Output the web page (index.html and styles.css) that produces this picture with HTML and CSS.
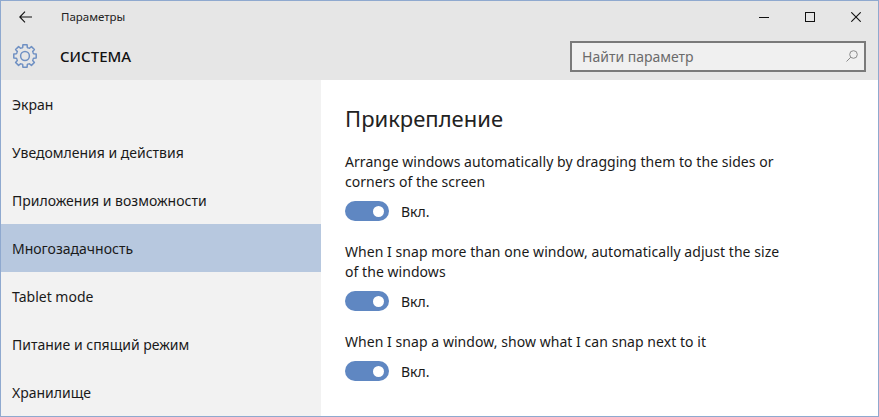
FILE: index.html
```html
<!DOCTYPE html>
<html lang="ru">
<head>
<meta charset="utf-8">
<title>Параметры</title>
<link rel="stylesheet" href="styles.css">
</head>
<body>
<div class="window">
  <header class="header">
    <div class="titlebar">
      <svg class="back" width="13" height="12" viewBox="0 0 13 12"><path d="M6 .7 .8 6 6 11.3M.8 6H13" fill="none" stroke="#111" stroke-width="1.1"/></svg>
      <span class="app-title">Параметры</span>
      <div class="controls">
        <svg width="10" height="10" viewBox="0 0 10 10"><path d="M0 5.5H10" stroke="#111" stroke-width="1"/></svg>
        <svg width="10" height="10" viewBox="0 0 10 10"><rect x=".5" y=".5" width="9" height="9" fill="none" stroke="#111" stroke-width="1"/></svg>
        <svg width="10" height="10" viewBox="0 0 10 10"><path d="M.3 .3 9.7 9.7M9.7 .3 .3 9.7" stroke="#111" stroke-width="1.1"/></svg>
      </div>
    </div>
    <div class="subheader">
      <svg class="gear" width="24" height="24" viewBox="-12 -12 24 24" fill="none" stroke="#6f90c3" stroke-width="1.5" stroke-linejoin="round">
        <path d="M7.95-3.29 8.6-2.3 11.2-2.1V2.1L8.6 2.3 7.95 3.29"/>
        <path transform="rotate(45)" d="M7.95-3.29 8.6-2.3 11.2-2.1V2.1L8.6 2.3 7.95 3.29"/>
        <path transform="rotate(90)" d="M7.95-3.29 8.6-2.3 11.2-2.1V2.1L8.6 2.3 7.95 3.29"/>
        <path transform="rotate(135)" d="M7.95-3.29 8.6-2.3 11.2-2.1V2.1L8.6 2.3 7.95 3.29"/>
        <path transform="rotate(180)" d="M7.95-3.29 8.6-2.3 11.2-2.1V2.1L8.6 2.3 7.95 3.29"/>
        <path transform="rotate(225)" d="M7.95-3.29 8.6-2.3 11.2-2.1V2.1L8.6 2.3 7.95 3.29"/>
        <path transform="rotate(270)" d="M7.95-3.29 8.6-2.3 11.2-2.1V2.1L8.6 2.3 7.95 3.29"/>
        <path transform="rotate(315)" d="M7.95-3.29 8.6-2.3 11.2-2.1V2.1L8.6 2.3 7.95 3.29"/>
        <circle r="4.4"/>
      </svg>
      <h1 class="section">СИСТЕМА</h1>
      <div class="search">
        <span class="search-text">Найти параметр</span>
        <svg width="12" height="12" viewBox="0 0 12 12" fill="none" stroke="#8a8a8a" stroke-width="1"><circle cx="7.5" cy="4.5" r="3.8"/><path d="M4.8 7.2 .5 11.5"/></svg>
      </div>
    </div>
  </header>
  <div class="main">
    <nav class="sidebar">
      <div class="nav-item">Экран</div>
      <div class="nav-item">Уведомления и действия</div>
      <div class="nav-item">Приложения и возможности</div>
      <div class="nav-item selected">Многозадачность</div>
      <div class="nav-item">Tablet mode</div>
      <div class="nav-item">Питание и спящий режим</div>
      <div class="nav-item">Хранилище</div>
    </nav>
    <section class="content">
      <h2 class="heading">Прикрепление</h2>
      <div class="setting">
        <p class="label">Arrange windows automatically by dragging them to the sides or corners of the screen</p>
        <div class="toggle-row"><span class="toggle"><span class="knob"></span></span><span class="state">Вкл.</span></div>
      </div>
      <div class="setting">
        <p class="label">When I snap more than one window, automatically adjust the size of the windows</p>
        <div class="toggle-row"><span class="toggle"><span class="knob"></span></span><span class="state">Вкл.</span></div>
      </div>
      <div class="setting">
        <p class="label">When I snap a window, show what I can snap next to it</p>
        <div class="toggle-row"><span class="toggle"><span class="knob"></span></span><span class="state">Вкл.</span></div>
      </div>
    </section>
  </div>
</div>
</body>
</html>
```
FILE: styles.css
```css
* { box-sizing: border-box; }
html, body { margin: 0; padding: 0; }
body {
  width: 879px;
  height: 417px;
  overflow: hidden;
  background: #fff;
  font-family: "Noto Sans", "Open Sans", sans-serif;
  color: #111;
}
.window {
  width: 879px;
  height: 417px;
  border: 1px solid #8fa9cf;
  display: flex;
  flex-direction: column;
  overflow: hidden;
}
.header { height: 79px; background: #e6e6e6; flex: none; }
.titlebar { height: 31px; display: flex; align-items: center; padding-left: 18px; }
.back { margin-right: 29px; }
.app-title { font-size: 11.5px; color: #222; }
.controls { margin-left: auto; display: flex; gap: 36px; padding-right: 17px; }
.subheader { height: 48px; display: flex; align-items: center; padding-left: 12px; }
.gear { margin-right: 23px; }
.section { margin: 0; font-size: 15px; font-weight: 500; color: #111; }
.search {
  margin-left: auto;
  margin-right: 12px;
  width: 296px;
  height: 31px;
  border: 2px solid #7a7a7a;
  background: #f0f0f0;
  display: flex;
  align-items: center;
  justify-content: space-between;
  padding: 0 6px 0 10px;
}
.search-text { font-size: 14px; color: #6b6b6b; }
.main { flex: 1; display: flex; min-height: 0; }
.sidebar { width: 320px; flex: none; background: #f2f2f2; }
.nav-item {
  height: 48px;
  padding-left: 11px;
  display: flex;
  align-items: center;
  font-size: 14px;
  color: #1a1a1a;
}
.nav-item.selected { background: #b7c8df; }
.content { flex: 1; padding: 23px 0 0 24px; background: #fff; }
.heading { margin: 0 0 19px; font-size: 22px; line-height: 30px; font-weight: 400; color: #222; }
.setting { margin-bottom: 21px; }
.label { margin: 0; width: 436px; font-size: 14px; line-height: 20px; letter-spacing: 0.05px; color: #1a1a1a; }
.toggle-row { margin-top: 9px; display: flex; align-items: center; height: 20px; }
.toggle {
  width: 44px;
  height: 20px;
  border-radius: 10px;
  background: #5f87c2;
  display: flex;
  align-items: center;
  justify-content: flex-end;
  padding-right: 5px;
}
.knob { width: 11px; height: 11px; border-radius: 50%; background: #fff; }
.state { margin-left: 12px; font-size: 14px; color: #1a1a1a; }
```
